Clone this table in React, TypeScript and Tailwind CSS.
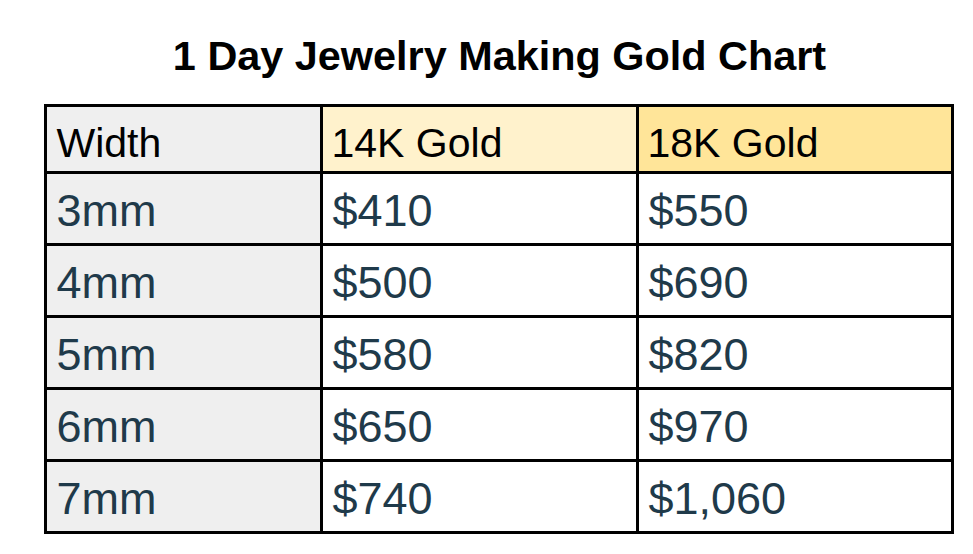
import { Fragment } from "react";

const rows = [
  { width: "3mm", k14: "$410", k18: "$550" },
  { width: "4mm", k14: "$500", k18: "$690" },
  { width: "5mm", k14: "$580", k18: "$820" },
  { width: "6mm", k14: "$650", k18: "$970" },
  { width: "7mm", k14: "$740", k18: "$1,060" },
];

function App() {
  return (
    <div className="min-h-screen bg-white font-['Liberation_Sans',Arial,sans-serif]">
      <div className="flex flex-col items-center pt-[33px]">
        <h1 className="ml-[26px] text-[41.4px] leading-[46px] font-bold text-black">1 Day Jewelry Making Gold Chart</h1>

        <div className="mt-[25px] ml-[24px] grid grid-cols-[273px_313px_312px] gap-[3px] border-[3px] border-black bg-black">
          <div className="h-[64px] bg-[#efefef] pl-[10px] pt-[13px] text-[41px] leading-[46px] text-black">Width</div>
          <div className="h-[64px] bg-[#fff2cc] pl-[9px] pt-[13px] text-[41px] leading-[46px] text-black">14K Gold</div>
          <div className="h-[64px] bg-[#ffe599] pl-[9px] pt-[13px] text-[41px] leading-[46px] text-black">18K Gold</div>

          {rows.map((row) => (
            <Fragment key={row.width}>
              <div className="h-[69px] bg-[#efefef] pl-[10px] pt-[12px] text-[45px] leading-[50px] text-[#1f3a4a]">
                {row.width}
              </div>
              <div className="h-[69px] bg-white pl-[10px] pt-[12px] text-[45px] leading-[50px] text-[#1f3a4a]">
                {row.k14}
              </div>
              <div className="h-[69px] bg-white pl-[10px] pt-[12px] text-[45px] leading-[50px] text-[#1f3a4a]">
                {row.k18}
              </div>
            </Fragment>
          ))}
        </div>
      </div>
    </div>
  );
}

export default App;
